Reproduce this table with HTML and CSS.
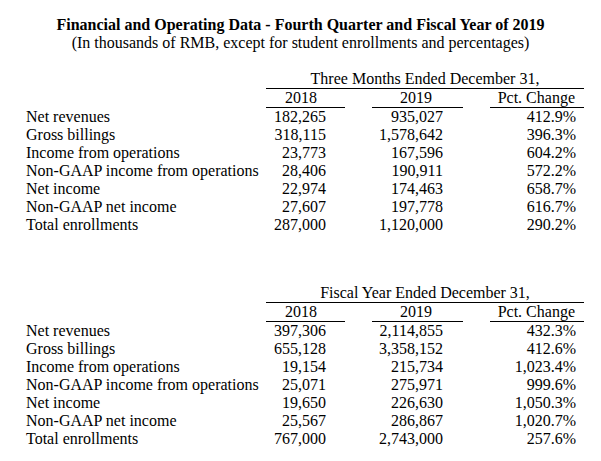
FILE: index.html
```html
<!DOCTYPE html>
<html>
<head>
<meta charset="utf-8">
<link rel="stylesheet" href="styles.css">
</head>
<body>
<div class="page">
  <div class="title">Financial and Operating Data - Fourth Quarter and Fiscal Year of 2019</div>
  <div class="subtitle">(In thousands of RMB, except for student enrollments and percentages)</div>

  <div class="grid first">
    <div class="span-head">Three Months Ended December 31,</div>
    <div class="lbl"></div>
    <div class="yh c1">2018</div>
    <div class="yh c2">2019</div>
    <div class="ph">Pct. Change</div>

    <div class="lbl">Net revenues</div><div class="n1">182,265</div><div class="n2">935,027</div><div class="n3">412.9%</div>
    <div class="lbl">Gross billings</div><div class="n1">318,115</div><div class="n2">1,578,642</div><div class="n3">396.3%</div>
    <div class="lbl">Income from operations</div><div class="n1">23,773</div><div class="n2">167,596</div><div class="n3">604.2%</div>
    <div class="lbl">Non-GAAP income from operations</div><div class="n1">28,406</div><div class="n2">190,911</div><div class="n3">572.2%</div>
    <div class="lbl">Net income</div><div class="n1">22,974</div><div class="n2">174,463</div><div class="n3">658.7%</div>
    <div class="lbl">Non-GAAP net income</div><div class="n1">27,607</div><div class="n2">197,778</div><div class="n3">616.7%</div>
    <div class="lbl">Total enrollments</div><div class="n1">287,000</div><div class="n2">1,120,000</div><div class="n3">290.2%</div>
  </div>

  <div class="grid second">
    <div class="span-head">Fiscal Year Ended December 31,</div>
    <div class="lbl"></div>
    <div class="yh c1">2018</div>
    <div class="yh c2">2019</div>
    <div class="ph">Pct. Change</div>

    <div class="lbl">Net revenues</div><div class="n1">397,306</div><div class="n2">2,114,855</div><div class="n3">432.3%</div>
    <div class="lbl">Gross billings</div><div class="n1">655,128</div><div class="n2">3,358,152</div><div class="n3">412.6%</div>
    <div class="lbl">Income from operations</div><div class="n1">19,154</div><div class="n2">215,734</div><div class="n3">1,023.4%</div>
    <div class="lbl">Non-GAAP income from operations</div><div class="n1">25,071</div><div class="n2">275,971</div><div class="n3">999.6%</div>
    <div class="lbl">Net income</div><div class="n1">19,650</div><div class="n2">226,630</div><div class="n3">1,050.3%</div>
    <div class="lbl">Non-GAAP net income</div><div class="n1">25,567</div><div class="n2">286,867</div><div class="n3">1,020.7%</div>
    <div class="lbl">Total enrollments</div><div class="n1">767,000</div><div class="n2">2,743,000</div><div class="n3">257.6%</div>
  </div>
</div>
</body>
</html>
```
FILE: styles.css
```css
html, body {
  margin: 0;
  padding: 0;
  background: #ffffff;
}

.page {
  width: 601px;
  padding-top: 16px;
  font-family: "Liberation Serif", "Times New Roman", serif;
  font-size: 16px;
  line-height: 18px;
  color: #000000;
}

.title {
  text-align: center;
  font-weight: bold;
}

.subtitle {
  text-align: center;
}

.grid {
  display: grid;
  grid-template-columns: 213px 79px 91px 94px;
  column-gap: 27px;
  padding-left: 26px;
  white-space: nowrap;
}

.grid.first {
  margin-top: 18px;
}

.grid.second {
  margin-top: 50px;
}

.span-head {
  grid-column: 2 / -1;
  text-align: center;
  border-bottom: 1px solid #000;
}

.yh, .ph {
  border-bottom: 1px solid #000;
}

.yh {
  text-align: center;
}

.yh.c1 {
  padding-right: 9px;
}

.yh.c2 {
  padding-right: 3px;
}

.ph {
  text-align: right;
  padding-right: 9px;
}

.n1, .n2, .n3 {
  text-align: right;
}

.n1 {
  padding-right: 19px;
}

.n2 {
  padding-right: 20px;
}

.n3 {
  padding-right: 8px;
}
```
